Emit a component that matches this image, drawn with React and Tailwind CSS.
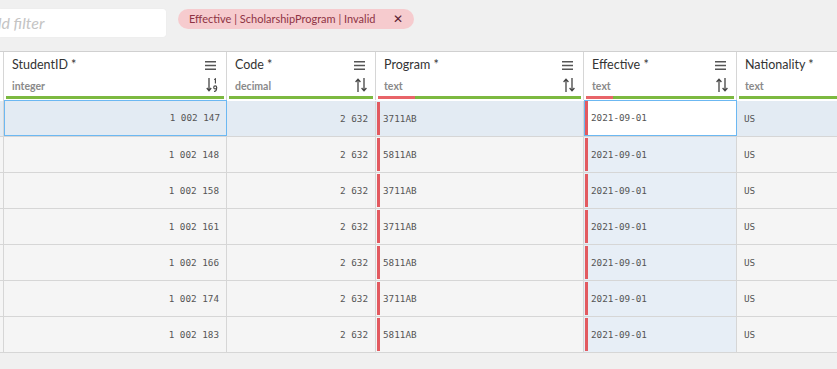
import React from 'react';

const columns = [
  { key: 'pad', width: 'w-[4px]' },
  { key: 'studentId', title: 'StudentID *', type: 'integer', sort: 'num', width: 'w-[223px]', align: 'right', red: 0 },
  { key: 'code', title: 'Code *', type: 'decimal', sort: 'both', width: 'w-[149px]', align: 'right', red: 0 },
  { key: 'program', title: 'Program *', type: 'text', sort: 'both', width: 'w-[208px]', align: 'left', red: 37, invalid: true },
  { key: 'effective', title: 'Effective *', type: 'text', sort: 'both', width: 'w-[153px]', align: 'left', red: 27, invalid: true, highlight: true },
  { key: 'nationality', title: 'Nationality *', type: 'text', sort: null, width: 'w-[180px]', align: 'left', red: 0 },
];

const rows = [
  { studentId: '1 002 147', code: '2 632', program: '3711AB', effective: '2021-09-01', nationality: 'US' },
  { studentId: '1 002 148', code: '2 632', program: '5811AB', effective: '2021-09-01', nationality: 'US' },
  { studentId: '1 002 158', code: '2 632', program: '3711AB', effective: '2021-09-01', nationality: 'US' },
  { studentId: '1 002 161', code: '2 632', program: '3711AB', effective: '2021-09-01', nationality: 'US' },
  { studentId: '1 002 166', code: '2 632', program: '5811AB', effective: '2021-09-01', nationality: 'US' },
  { studentId: '1 002 174', code: '2 632', program: '3711AB', effective: '2021-09-01', nationality: 'US' },
  { studentId: '1 002 183', code: '2 632', program: '5811AB', effective: '2021-09-01', nationality: 'US' },
];

const MenuIcon = () => (
  <svg width="11" height="9" viewBox="0 0 11 9" className="shrink-0">
    <path d="M0 0.75h11M0 4.5h11M0 8.25h11" stroke="#555" strokeWidth="1.3" />
  </svg>
);

const SortBoth = () => (
  <svg width="12" height="14" viewBox="0 0 12 14" className="shrink-0">
    <path d="M3 14V1.5M0.6 4L3 1.2L5.4 4" stroke="#444" strokeWidth="1.3" fill="none" />
    <path d="M9 0V12.5M6.6 10L9 12.8L11.4 10" stroke="#444" strokeWidth="1.3" fill="none" />
  </svg>
);

// arrow down with 1 over 9
const SortNum = () => (
  <svg width="12" height="14" viewBox="0 0 12 14" className="shrink-0">
    <path d="M3 0V12.5M0.8 10L3 12.8L5.2 10" stroke="#444" strokeWidth="1.3" fill="none" />
    <path d="M8.2 1.6L9.4 0.8V5.6" stroke="#444" strokeWidth="1.1" fill="none" />
    <circle cx="9.2" cy="9.4" r="1.5" stroke="#444" strokeWidth="1.1" fill="none" />
    <path d="M10.7 9.4C10.7 12 9.8 13.4 8 13.4" stroke="#444" strokeWidth="1.1" fill="none" />
  </svg>
);

const HeaderCell = ({ col }) => {
  if (col.key === 'pad') {
    return <div className={`${col.width} shrink-0 h-[48px] border-r border-[#d6d6d6] bg-white`} />;
  }
  return (
    <div className={`${col.width} shrink-0 h-[48px] border-r border-[#d6d6d6] bg-white flex flex-col`}>
      <div className="mt-[5px] h-[16px] pl-[8px] pr-[10px] flex items-center justify-between">
        <span className="text-[12.5px] text-[#333] whitespace-nowrap">{col.title}</span>
        {col.sort && <MenuIcon />}
      </div>
      <div className="mt-[3px] h-[18px] pl-[8px] pr-[8px] flex items-center justify-between">
        <span className="text-[10.5px] font-bold text-[#8a8a8a] pt-[3px]">{col.type}</span>
        {col.sort === 'num' && <SortNum />}
        {col.sort === 'both' && <SortBoth />}
      </div>
      <div className="mt-[2px] mx-[2px] h-[3px] flex">
        {col.red > 0 && <div className="h-full bg-[#e86468]" style={{ width: col.red }} />}
        <div className="h-full flex-1 bg-[#7cb940]" />
      </div>
    </div>
  );
};

const CellText = ({ children }) => (
  <span className="font-['DejaVu_Sans_Mono',monospace] text-[9.3px] text-[#555] whitespace-nowrap">{children}</span>
);

const BodyCell = ({ col, value, rowIndex }) => {
  const selectedRow = rowIndex === 0;
  let bg = selectedRow ? 'bg-[#e3ebf3]' : 'bg-[#f5f5f5]';
  if (col.highlight && !selectedRow) bg = 'bg-[#e7eef6]';

  if (col.key === 'pad') {
    return <div className={`${col.width} shrink-0 h-full border-r border-[#d6d6d6] ${bg}`} />;
  }

  let pad = 'pl-[7px]';
  if (col.align === 'right') pad = 'justify-end pr-[7px]';
  if (col.invalid) pad = 'pl-[1px]';

  return (
    <div className={`${col.width} shrink-0 h-full flex items-center border-r border-[#d6d6d6] ${bg} ${pad}`}>
      {col.invalid && <div className="h-[33px] w-[3px] bg-[#e25a60] mr-[3px] shrink-0" />}
      <CellText>{value}</CellText>
    </div>
  );
};

const FocusedCell = ({ col, value }) => (
  <div className={`${col.width} shrink-0 h-[35px] relative border-r border-[#d6d6d6]`}>
    <div
      className={`absolute left-0 top-[-1px] right-[-1px] bottom-0 border border-[#6cb8f2] flex items-center ${
        col.key === 'effective' ? 'bg-white' : 'bg-[#e3ebf3]'
      } ${col.align === 'right' ? 'justify-end pr-[6px]' : ''}`}
    >
      {col.invalid && <div className="self-stretch w-[3px] bg-[#e25a60] mr-[3px] shrink-0" />}
      <CellText>{value}</CellText>
    </div>
  </div>
);

const App = () => {
  return (
    <div className="w-[837px] h-[369px] overflow-hidden bg-[#f0f0f0] font-['Lato',sans-serif]">
      {/* Filter bar */}
      <div className="h-[51px] flex items-start pt-[9px]">
        <div className="w-[166px] h-[28px] bg-white rounded-r-[3px] shadow-[0_0_1px_rgba(0,0,0,0.08)] overflow-hidden flex items-center">
          <span className="ml-[-17px] text-[16px] italic text-[#c4c4c4] whitespace-nowrap">Add filter</span>
        </div>
        <div className="ml-[12px] h-[20px] w-[236px] rounded-full bg-[#f6cbce] flex items-center justify-between pl-[11px] pr-[11px]">
          <span className="text-[11px] text-[#8e3344] whitespace-nowrap">Effective | ScholarshipProgram | Invalid</span>
          <span className="text-[12px] text-[#5a2030] leading-none">✕</span>
        </div>
      </div>

      {/* Grid */}
      <div className="border-t border-[#d0d0d0]">
        <div className="flex">
          {columns.map((col) => (
            <HeaderCell key={col.key} col={col} />
          ))}
        </div>
        <div className="flex w-full h-[1px]">
          <div className="w-[4px] border-r border-[#d6d6d6] bg-white" />
          <div className="flex-1 bg-white" />
        </div>
        {rows.map((row, i) => (
          <div key={row.studentId} className="flex h-[36px] border-b border-[#d6d6d6]">
            {columns.map((col) => {
              if (i === 0 && (col.key === 'studentId' || col.key === 'effective')) {
                return <FocusedCell key={col.key} col={col} value={row[col.key]} />;
              }
              return <BodyCell key={col.key} col={col} value={row[col.key]} rowIndex={i} />;
            })}
          </div>
        ))}
      </div>
    </div>
  );
};

export default App;
